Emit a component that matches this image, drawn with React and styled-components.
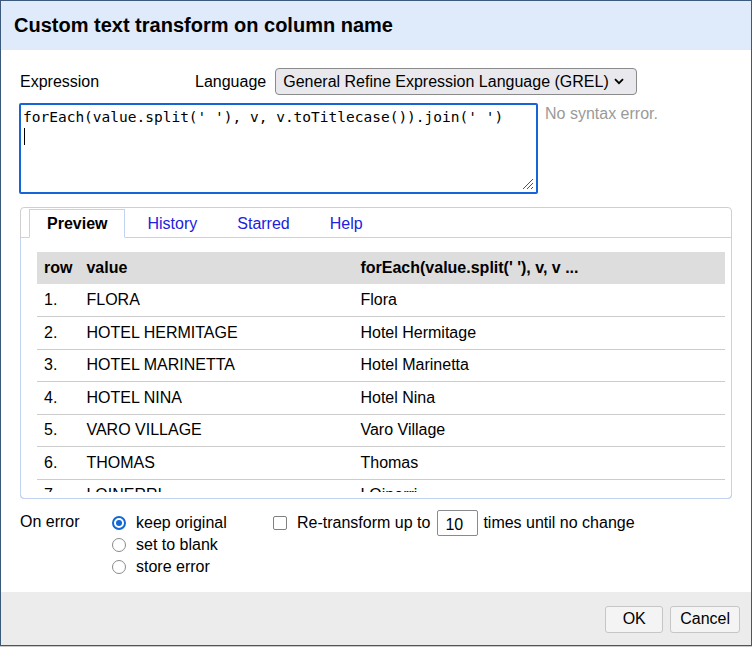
import React from "react";
import styled, { createGlobalStyle } from "styled-components";

const GlobalStyle = createGlobalStyle`
  html, body {
    margin: 0;
    padding: 0;
    background: #c9c9c9;
  }
  body {
    font-family: "Liberation Sans", Arial, sans-serif;
    color: #000;
  }
`;

const Dialog = styled.div`
  width: 752px;
  height: 646px;
  box-sizing: border-box;
  border: 1px solid #3b5a7b;
  background: #fff;
  display: flex;
  flex-direction: column;
`;

const Header = styled.div`
  height: 49px;
  flex: none;
  background: #dfeafa;
  display: flex;
  align-items: center;
  padding: 0 13px;
  font-size: 20px;
  font-weight: bold;
`;

const Body = styled.div`
  flex: 1;
  padding: 18px 19px 0 18px;
  display: flex;
  flex-direction: column;
`;

const ExprHeader = styled.div`
  display: flex;
  align-items: center;
  height: 27px;
  font-size: 16px;
`;

const Label = styled.span`
  width: ${(p) => p.$w || "auto"};
  padding-left: ${(p) => p.$pl || "0"};
  flex: none;
`;

const SelectBox = styled.div`
  position: relative;
  margin-left: 9px;
  width: 362px;
  height: 27px;
  box-sizing: border-box;
  border: 1px solid #8a8a8a;
  border-radius: 4px;
  background: #e9e9ed;
  display: flex;
  align-items: center;
  padding: 0 7px;
  font-size: 16px;
`;

const Chevron = styled.svg`
  position: absolute;
  right: 12px;
  top: 9px;
`;

const ExprRow = styled.div`
  display: flex;
  align-items: flex-start;
  margin-top: 8px;
`;

const ExprBox = styled.div`
  position: relative;
  width: 519px;
  height: 91px;
  box-sizing: border-box;
  border: 2px solid #1565d8;
  border-radius: 2px;
  padding: 3px 2px;
  font-family: "DejaVu Sans Mono", "Liberation Mono", monospace;
  font-size: 14.5px;
  line-height: 18px;
  white-space: pre;
`;

const Caret = styled.span`
  display: block;
  width: 1px;
  height: 17px;
  margin: 2px 0 0 1px;
  background: #000;
`;

const Grip = styled.svg`
  position: absolute;
  right: 2px;
  bottom: 2px;
`;

const Status = styled.div`
  margin-left: 7px;
  margin-top: 2px;
  font-size: 16px;
  color: #9a9a9a;
`;

const Tabs = styled.div`
  margin-top: 13px;
  margin-left: 1px;
  width: 712px;
  height: 292px;
  box-sizing: border-box;
  border: 1px solid #cfcfcf;
  border-radius: 4px;
  display: flex;
  flex-direction: column;
`;

const TabNav = styled.div`
  display: flex;
  gap: 4px;
  padding: 1px 0 0 8px;
  height: 29px;
  flex: none;
`;

const Tab = styled.div`
  height: 29px;
  box-sizing: border-box;
  padding: 0 17px;
  display: flex;
  align-items: center;
  font-size: 16px;
  position: relative;
  z-index: 1;
  color: ${(p) => (p.$active ? "#000" : "#2121dd")};
  font-weight: ${(p) => (p.$active ? "bold" : "normal")};
  background: ${(p) => (p.$active ? "#fff" : "transparent")};
  border: 1px solid ${(p) => (p.$active ? "#c2d3f4" : "transparent")};
  border-bottom: 1px solid ${(p) => (p.$active ? "#fff" : "transparent")};
`;

const Panel = styled.div`
  flex: 1;
  min-height: 0;
  margin: -1px;
  border: 1px solid #c2d3f4;
  border-radius: 0 0 4px 4px;
  padding: 14px 6px 6px 16px;
  display: flex;
  flex-direction: column;
`;

const TableWrap = styled.div`
  flex: 1;
  min-height: 0;
  overflow: hidden;
`;

const Table = styled.table`
  width: 100%;
  border-collapse: collapse;
  font-size: 16px;
`;

const Th = styled.th`
  background: #dddddd;
  text-align: left;
  height: 32px;
  padding: 0 7px;
  font-weight: bold;
  width: ${(p) => p.$w || "auto"};
  box-sizing: border-box;
`;

const Td = styled.td`
  height: 32.5px;
  padding: 0 7px;
  border-bottom: 1px solid #cccccc;
  box-sizing: border-box;
`;

const Options = styled.div`
  display: flex;
  align-items: flex-start;
  margin-top: 12px;
  font-size: 16px;
  line-height: 22px;
`;

const RadioGroup = styled.div`
  display: flex;
  flex-direction: column;
  width: 161px;
  flex: none;
  padding-top: 0.5px;
`;

const RadioItem = styled.label`
  display: flex;
  align-items: center;
  gap: 10px;
  height: 22px;
`;

const Radio = styled.span`
  width: 14px;
  height: 14px;
  box-sizing: border-box;
  border-radius: 50%;
  border: ${(p) => (p.$checked ? "2px solid #1266d6" : "1.5px solid #8a8a8a")};
  display: flex;
  align-items: center;
  justify-content: center;
  &::after {
    content: "";
    display: ${(p) => (p.$checked ? "block" : "none")};
    width: 6px;
    height: 6px;
    border-radius: 50%;
    background: #1266d6;
  }
`;

const Retransform = styled.div`
  display: flex;
  align-items: center;
  height: 26px;
  margin-top: -1px;
`;

const Checkbox = styled.span`
  width: 14px;
  height: 14px;
  box-sizing: border-box;
  border: 1.5px solid #808080;
  border-radius: 2px;
  margin-right: 10px;
`;

const TimesInput = styled.div`
  width: 41px;
  height: 26px;
  box-sizing: border-box;
  border: 1px solid #8a8a8a;
  border-radius: 2px;
  padding: 3px 0 0 7px;
  margin: 0 5px 0 7px;
  line-height: 22px;
`;

const Footer = styled.div`
  height: 53px;
  flex: none;
  background: #ececec;
  display: flex;
  justify-content: flex-end;
  align-items: center;
  gap: 7px;
  padding-right: 11px;
`;

const Button = styled.button`
  height: 27px;
  min-width: 58px;
  padding: 0 9px;
  margin-top: 1px;
  border: 1px solid #c6c6c6;
  border-radius: 3px;
  background: #f4f4f4;
  font-family: "Liberation Sans", Arial, sans-serif;
  font-size: 16px;
  color: #000;
`;

const rows = [
  ["FLORA", "Flora"],
  ["HOTEL HERMITAGE", "Hotel Hermitage"],
  ["HOTEL MARINETTA", "Hotel Marinetta"],
  ["HOTEL NINA", "Hotel Nina"],
  ["VARO VILLAGE", "Varo Village"],
  ["THOMAS", "Thomas"],
  ["LOINERRI", "LOinerri"],
];

export default function App() {
  return (
    <>
      <GlobalStyle />
      <Dialog>
        <Header>Custom text transform on column name</Header>
        <Body>
          <ExprHeader>
            <Label $w="175px" $pl="1px">Expression</Label>
            <Label>Language</Label>
            <SelectBox>
              General Refine Expression Language (GREL)
              <Chevron width="10" height="7" viewBox="0 0 10 7">
                <path d="M1 1.2 L5 5.2 L9 1.2" fill="none" stroke="#000" strokeWidth="1.8" />
              </Chevron>
            </SelectBox>
          </ExprHeader>
          <ExprRow>
            <ExprBox>
              {"forEach(value.split(' '), v, v.toTitlecase()).join(' ')"}
              <Caret />
              <Grip width="14" height="14" viewBox="0 0 14 14">
                <path d="M13 3 L3 13 M13 7 L7 13 M13 11 L11 13" stroke="#555" strokeWidth="1" />
              </Grip>
            </ExprBox>
            <Status>No syntax error.</Status>
          </ExprRow>
          <Tabs>
            <TabNav>
              <Tab $active>Preview</Tab>
              <Tab>History</Tab>
              <Tab>Starred</Tab>
              <Tab>Help</Tab>
            </TabNav>
            <Panel>
              <TableWrap>
                <Table>
                  <thead>
                    <tr>
                      <Th $w="41px">row</Th>
                      <Th $w="274px">value</Th>
                      <Th>forEach(value.split(' '), v, v ...</Th>
                    </tr>
                  </thead>
                  <tbody>
                    {rows.map((r, i) => (
                      <tr key={i}>
                        <Td>{i + 1}.</Td>
                        <Td>{r[0]}</Td>
                        <Td>{r[1]}</Td>
                      </tr>
                    ))}
                  </tbody>
                </Table>
              </TableWrap>
            </Panel>
          </Tabs>
          <Options>
            <Label $w="92px" $pl="1px">On error</Label>
            <RadioGroup>
              <RadioItem><Radio $checked />keep original</RadioItem>
              <RadioItem><Radio />set to blank</RadioItem>
              <RadioItem><Radio />store error</RadioItem>
            </RadioGroup>
            <Retransform>
              <Checkbox />
              Re-transform up to
              <TimesInput>10</TimesInput>
              times until no change
            </Retransform>
          </Options>
        </Body>
        <Footer>
          <Button>OK</Button>
          <Button>Cancel</Button>
        </Footer>
      </Dialog>
    </>
  );
}
